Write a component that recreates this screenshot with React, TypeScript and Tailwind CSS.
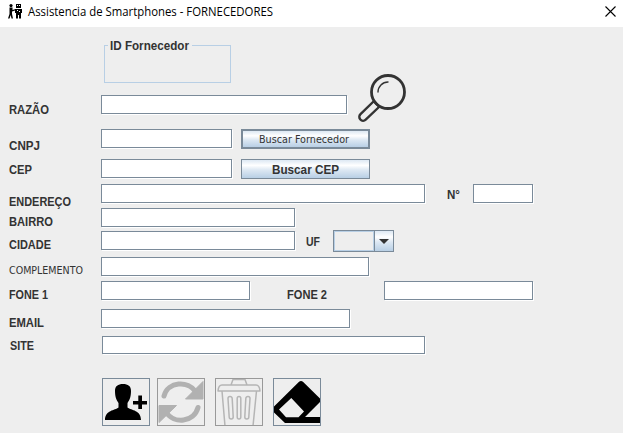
import type { ReactNode } from "react";

const face = "bg-[linear-gradient(to_bottom,#dde8f3_0%,#ffffff_30%,#dde8f3_55%,#b8cfe5_100%)]";

function Label({ children, className = "", bold = true, length }: { children: string; className?: string; bold?: boolean; length: number }) {
  return (
    <span className={`block h-4 shrink-0 ${className}`}>
      <svg width={length + 4} height="16" className="block overflow-visible">
        <text
          x="0"
          y="12"
          textLength={length}
          lengthAdjust="spacingAndGlyphs"
          fill="#333333"
          className={bold ? "font-['Liberation_Sans',sans-serif] text-[12px] font-bold" : "font-['DejaVu_Sans',sans-serif] text-[11px]"}
        >
          {children}
        </text>
      </svg>
    </span>
  );
}

function Field({ className }: { className: string }) {
  return (
    <input
      type="text"
      className={`block h-[19px] shrink-0 border border-[#7a8a99] bg-white shadow-[1px_1px_0_#ffffff] outline-none ${className}`}
    />
  );
}

function Row({ className, children }: { className: string; children: ReactNode }) {
  return <div className={`flex items-start ${className}`}>{children}</div>;
}

function IconButton({ className, label, children }: { className: string; label: string; children: ReactNode }) {
  return (
    <button aria-label={label} className={`block size-12 shrink-0 overflow-hidden border ${className}`}>
      <svg viewBox="0 0 46 46" className="block size-[46px]">{children}</svg>
    </button>
  );
}

export default function App() {
  return (
    <div className="h-[433px] w-[623px] overflow-hidden bg-[#eeeeee] font-['Liberation_Sans',sans-serif]">
      <header className="flex h-[27px] items-start bg-white">
        <svg viewBox="0 0 16 16" className="ml-[7px] mt-[3px] size-4 shrink-0" fill="#000">
          <circle cx="4" cy="2.6" r="1.6" />
          <path d="M2.5 4.5h3V7l2.5-.7v1.200L5 8.600V11l1 4.500H4.500L3.700 12l-1.200 3.500H1L2.500 11z" />
          <path d="M9 1h5v4H9zM8 6h7v4h-1v5.500h-2V12h-1v3.500H9V10H8z" />
          <path d="M10 2h1v1h-1zM12 2h1v1h-1zM10 7h1v1h-1zM12 8h1v1h-1z" fill="#fff" />
        </svg>
        <svg width="250" height="20" className="ml-[5px] mt-[2px] shrink-0 overflow-visible">
          <text x="0" y="14" textLength="245" lengthAdjust="spacingAndGlyphs" className="font-['Open_Sans',sans-serif] text-[12px]">
            Assistencia de Smartphones - FORNECEDORES
          </text>
        </svg>
        <svg viewBox="0 0 11 11" className="ml-auto mr-[7px] mt-[6px] size-[11px]" fill="none" stroke="#000" strokeWidth="1.1">
          <path d="M.5.5l10 10M10.5.5l-10 10" />
        </svg>
      </header>

      <main>
        <div className="ml-[104px] mt-[18px] h-[38px] w-[127px] border border-[#b8cfe5]">
          <div className="-mt-[8px] ml-[3px] w-[84px] bg-[#eeeeee] pl-[2px]">
            <Label length={79}>ID Fornecedor</Label>
          </div>
        </div>

        <Row className="mt-[12px] h-[34px]">
          <Label className="ml-[9px] mt-[7px] w-[92px]" length={40}>RAZÃO</Label>
          <Field className="w-[246px]" />
          <svg viewBox="0 0 48 49" className="-mt-[21px] ml-[11px] h-[49px] w-12 shrink-0" fill="none" stroke="#333333" strokeLinecap="round">
            <circle cx="30" cy="18" r="16.5" strokeWidth="2.800" />
            <path d="M20 18a10 10 0 0 1 10-10" strokeWidth="1.400" />
            <path d="M15.500 27.500L2.500 40.200a3.700 3.700 0 0 0 5.200 5.500L21 33M18.300 29.700L16 27.500M20.500 32L17.500 29" strokeWidth="2.400" />
          </svg>
        </Row>

        <Row className="h-[30px]">
          <Label className="ml-[9px] mt-[9px] w-[92px]" length={31}>CNPJ</Label>
          <Field className="w-[131px]" />
          <button className={`ml-[9px] flex h-5 w-[129px] items-center border-2 border-[#7a8a99] pl-[16px] ${face}`}>
            <Label bold={false} length={90} className="w-[92px]">Buscar Fornecedor</Label>
          </button>
        </Row>

        <Row className="h-[25px]">
          <Label className="ml-[9px] mt-[3px] w-[92px]" length={23}>CEP</Label>
          <Field className="w-[131px]" />
          <button className={`ml-[9px] flex h-5 w-[129px] items-center border border-[#7a8a99] pl-[30px] ${face}`}>
            <svg width="70" height="18" className="block overflow-visible">
              <text x="0" y="14" textLength="67" lengthAdjust="spacingAndGlyphs" fill="#333333" className="text-[13px] font-bold">Buscar CEP</text>
            </svg>
          </button>
        </Row>

        <Row className="h-[24px]">
          <Label className="ml-[9px] mt-[10px] w-[92px]" length={62}>ENDEREÇO</Label>
          <Field className="w-[324px]" />
          <Label className="ml-[22px] mt-[3px] w-[26px]" length={13}>N°</Label>
          <Field className="w-[60px]" />
        </Row>

        <Row className="h-[23px]">
          <Label className="ml-[9px] mt-[6px] w-[92px]" length={44}>BAIRRO</Label>
          <Field className="w-[194px]" />
        </Row>

        <Row className="h-[26px]">
          <Label className="ml-[9px] mt-[6px] w-[92px]" length={42}>CIDADE</Label>
          <Field className="w-[194px]" />
          <Label className="ml-[11px] mt-[3px] w-[27px]" length={14}>UF</Label>
          <button aria-label="UF" className="-mt-px flex h-[22px] w-[61px] border border-[#7a8a99]">
            <span className="h-5 w-10 border border-[#b8cfe5]" />
            <span className={`flex h-5 w-[19px] items-center justify-center border-l border-[#7a8a99] ${face}`}>
              <svg width="10" height="5" fill="#333333"><path d="M0 0h10L5 5z" /></svg>
            </span>
          </button>
        </Row>

        <Row className="h-[24px]">
          <Label className="ml-[9px] mt-[5px] w-[92px]" bold={false} length={74}>COMPLEMENTO</Label>
          <Field className="w-[268px]" />
        </Row>

        <Row className="h-[28px]">
          <Label className="ml-[9px] mt-[6px] w-[92px]" length={39}>FONE 1</Label>
          <Field className="w-[149px]" />
          <Label className="ml-[37px] mt-[6px] w-[97px]" length={40}>FONE 2</Label>
          <Field className="w-[149px]" />
        </Row>

        <Row className="h-[27px]">
          <Label className="ml-[9px] mt-[6px] w-[92px]" length={35}>EMAIL</Label>
          <Field className="w-[249px]" />
        </Row>

        <Row className="h-[42px]">
          <Label className="ml-[10px] mt-[2px] w-[92px]" length={24}>SITE</Label>
          <Field className="!h-[18px] w-[323px]" />
        </Row>

        <div className="flex pl-[102px]">
          <IconButton label="Adicionar" className="border-[#7a8a99]">
            <path d="M12 12C12 7 15 5 20 5S28 7 28 12c0 6-1.500 9-3.500 12v4.500c4 3 13.500 2.500 13.500 12.500H2c0-10 10-9.500 13.500-12.500V24c-2-3-3.500-6-3.500-12z" fill="#000" />
            <path d="M35.300 16.500h3.700V22h5v3.500h-5V30h-3.700v-4.500h-5.300V22h5.300z" fill="#000" />
          </IconButton>
          <IconButton label="Atualizar" className="ml-[7px] border-[#999999]">
            <g fill="none" stroke="#b1b1b1" strokeWidth="5" strokeLinecap="round">
              <path d="M6 17C10 2.500 30 1 38 13M40 28.500C36 43.500 16 45.500 8 33" />
            </g>
            <path d="M45 2.500v17.500H27.500zM1 26.500h17.500L1 43.500z" fill="#b1b1b1" stroke="#b1b1b1" strokeWidth="1" strokeLinejoin="round" />
          </IconButton>
          <IconButton label="Excluir" className="ml-[10px] border-[#999999]">
            <g fill="none" stroke="#b5b5b5" strokeWidth="1.500" strokeLinejoin="round">
              <path d="M15 6l2-5.500h12L31 6M6 6h34q3.500 0 4 6H2q.5-6 4-6zM6 12l3 35h28l3.500-35" />
              <path d="M12 19.500q0-2 2-2t2.200 2l1 18.500q0 2-2 2t-2-2zM21.200 19.500q0-2 1.800-2t1.800 2V38q0 2-1.800 2t-1.800-2zM34 19.500q0-2-2-2t-2.200 2l-1 18.500q0 2 2 2t2-2z" />
            </g>
          </IconButton>
          <IconButton label="Limpar" className="ml-[10px] border-[#7a8a99]">
            <path fillRule="evenodd" d="M24.800 3Q27 1 29.200 3L46 19.500v3.500L31 38h15v6H11L0 33.500v-6zM17.300 19L5 30.500 12 38.300H24.500L30 32.500z" fill="#000" />
          </IconButton>
        </div>
      </main>
    </div>
  );
}
